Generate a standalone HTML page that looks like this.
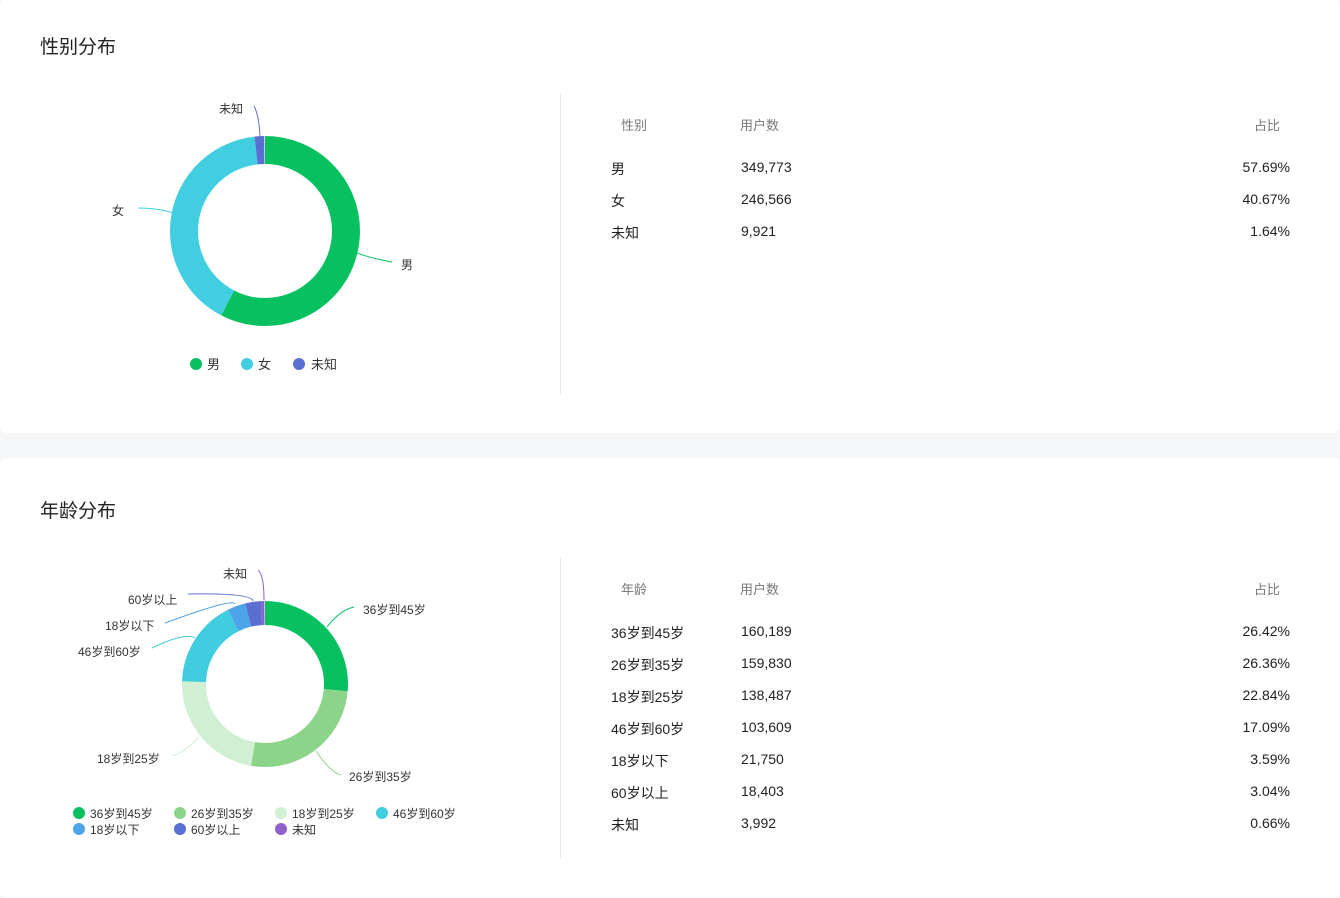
<!DOCTYPE html>
<html><head><meta charset="utf-8"><style>
*{margin:0;padding:0;box-sizing:border-box}
body{width:1340px;height:883px;background:#f5f6f8;font-family:"Liberation Sans","Noto Sans CJK SC",sans-serif;color:#222;position:relative;overflow:hidden}
.card{position:absolute;left:0;width:1340px;background:#fff;border-radius:6px}
.title{position:absolute;left:40px;font-size:19px;color:#222}
.vline{position:absolute;left:560px;width:1px;background:#e8e8e8}
.t{position:absolute;font-size:14px;color:#222;white-space:nowrap}
.h{color:#777;font-size:13px}
.r{text-align:right;width:100px}
svg text{font-family:"Liberation Sans","Noto Sans CJK SC",sans-serif;font-size:12px;fill:#333}
</style></head><body>
<div class="card" style="top:0;height:433px"></div>
<div class="card" style="top:458px;height:440px"></div>

<div class="title" style="top:32px">性别分布</div>
<div class="title" style="top:496px">年龄分布</div>
<div class="vline" style="top:94px;height:300px"></div>
<div class="vline" style="top:558px;height:300px"></div>

<svg width="560" height="883" style="position:absolute;left:0;top:0">
 <g transform="translate(265,231) rotate(-90)" fill="none" stroke-width="28">
  <circle r="81" pathLength="100" stroke="#07c160" stroke-dasharray="57.69 100" stroke-dashoffset="0"/>
  <circle r="81" pathLength="100" stroke="#40cee0" stroke-dasharray="40.67 100" stroke-dashoffset="-57.69"/>
  <circle r="81" pathLength="100" stroke="#5b6fd0" stroke-dasharray="1.64 100" stroke-dashoffset="-98.36"/>
 </g>
 <g fill="none" stroke-width="1">
  <path d="M357,253 Q370,258 392,262" stroke="#07c160"/>
  <path d="M176,214 Q160,208 138,208" stroke="#40cee0"/>
  <path d="M260,137 Q259,115 254,106" stroke="#5b6fd0"/>
 </g>
 <text x="401" y="269">男</text>
 <text x="112" y="215">女</text>
 <text x="219" y="113">未知</text>
 <circle cx="196" cy="364" r="6" fill="#07c160"/><text x="207" y="369" style="font-size:13px">男</text>
 <circle cx="247" cy="364" r="6" fill="#40cee0"/><text x="258" y="369" style="font-size:13px">女</text>
 <circle cx="299" cy="364" r="6" fill="#5b6fd0"/><text x="311" y="369" style="font-size:13px">未知</text>

 <g transform="translate(265,684) rotate(-90)" fill="none" stroke-width="24">
  <circle r="71" pathLength="100" stroke="#07c160" stroke-dasharray="26.42 100" stroke-dashoffset="0"/>
  <circle r="71" pathLength="100" stroke="#8dd48b" stroke-dasharray="26.36 100" stroke-dashoffset="-26.42"/>
  <circle r="71" pathLength="100" stroke="#d1f0d3" stroke-dasharray="22.84 100" stroke-dashoffset="-52.78"/>
  <circle r="71" pathLength="100" stroke="#40cde0" stroke-dasharray="17.09 100" stroke-dashoffset="-75.62"/>
  <circle r="71" pathLength="100" stroke="#4ea4e8" stroke-dasharray="3.59 100" stroke-dashoffset="-92.71"/>
  <circle r="71" pathLength="100" stroke="#5b6fd0" stroke-dasharray="3.04 100" stroke-dashoffset="-96.30"/>
  <circle r="71" pathLength="100" stroke="#8e5fcf" stroke-dasharray="0.66 100" stroke-dashoffset="-99.34"/>
 </g>
 <g fill="none" stroke-width="1">
  <path d="M327,627 Q340,610 354,607" stroke="#07c160"/>
  <path d="M316,751 Q330,772 341,775" stroke="#8dd48b"/>
  <path d="M199,737 Q185,752 172,756" stroke="#d1f0d3"/>
  <path d="M195,638 Q185,632 152,648" stroke="#40cde0"/>
  <path d="M235,604 Q233,598 165,623" stroke="#4ea4e8"/>
  <path d="M253,601 Q252,593 188,594" stroke="#5b6fd0"/>
  <path d="M264,600 Q264,575 258,570" stroke="#8e5fcf"/>
 </g>
 <text x="363" y="614">36岁到45岁</text>
 <text x="349" y="781">26岁到35岁</text>
 <text x="97" y="763">18岁到25岁</text>
 <text x="78" y="656">46岁到60岁</text>
 <text x="105" y="630">18岁以下</text>
 <text x="128" y="604">60岁以上</text>
 <text x="223" y="578">未知</text>
 <g style="font-size:12px">
 <circle cx="79" cy="813" r="6" fill="#07c160"/><text x="90" y="818">36岁到45岁</text>
 <circle cx="180" cy="813" r="6" fill="#8dd48b"/><text x="191" y="818">26岁到35岁</text>
 <circle cx="281" cy="813" r="6" fill="#d1f0d3"/><text x="292" y="818">18岁到25岁</text>
 <circle cx="382" cy="813" r="6" fill="#40cde0"/><text x="393" y="818">46岁到60岁</text>
 <circle cx="79" cy="829" r="6" fill="#4ea4e8"/><text x="90" y="834">18岁以下</text>
 <circle cx="180" cy="829" r="6" fill="#5b6fd0"/><text x="191" y="834">60岁以上</text>
 <circle cx="281" cy="829" r="6" fill="#8e5fcf"/><text x="292" y="834">未知</text>
 </g>
</svg>

<div class="t h" style="left:621px;top:115px">性别</div>
<div class="t h" style="left:740px;top:115px">用户数</div>
<div class="t h" style="left:1254px;top:115px">占比</div>
<div class="t" style="left:611px;top:159px">男</div><div class="t" style="left:741px;top:159px">349,773</div><div class="t r" style="left:1190px;top:159px">57.69%</div>
<div class="t" style="left:611px;top:191px">女</div><div class="t" style="left:741px;top:191px">246,566</div><div class="t r" style="left:1190px;top:191px">40.67%</div>
<div class="t" style="left:611px;top:223px">未知</div><div class="t" style="left:741px;top:223px">9,921</div><div class="t r" style="left:1190px;top:223px">1.64%</div>

<div class="t h" style="left:621px;top:579px">年龄</div>
<div class="t h" style="left:740px;top:579px">用户数</div>
<div class="t h" style="left:1254px;top:579px">占比</div>
<div class="t" style="left:611px;top:623px">36岁到45岁</div><div class="t" style="left:741px;top:623px">160,189</div><div class="t r" style="left:1190px;top:623px">26.42%</div>
<div class="t" style="left:611px;top:655px">26岁到35岁</div><div class="t" style="left:741px;top:655px">159,830</div><div class="t r" style="left:1190px;top:655px">26.36%</div>
<div class="t" style="left:611px;top:687px">18岁到25岁</div><div class="t" style="left:741px;top:687px">138,487</div><div class="t r" style="left:1190px;top:687px">22.84%</div>
<div class="t" style="left:611px;top:719px">46岁到60岁</div><div class="t" style="left:741px;top:719px">103,609</div><div class="t r" style="left:1190px;top:719px">17.09%</div>
<div class="t" style="left:611px;top:751px">18岁以下</div><div class="t" style="left:741px;top:751px">21,750</div><div class="t r" style="left:1190px;top:751px">3.59%</div>
<div class="t" style="left:611px;top:783px">60岁以上</div><div class="t" style="left:741px;top:783px">18,403</div><div class="t r" style="left:1190px;top:783px">3.04%</div>
<div class="t" style="left:611px;top:815px">未知</div><div class="t" style="left:741px;top:815px">3,992</div><div class="t r" style="left:1190px;top:815px">0.66%</div>
</body></html>
